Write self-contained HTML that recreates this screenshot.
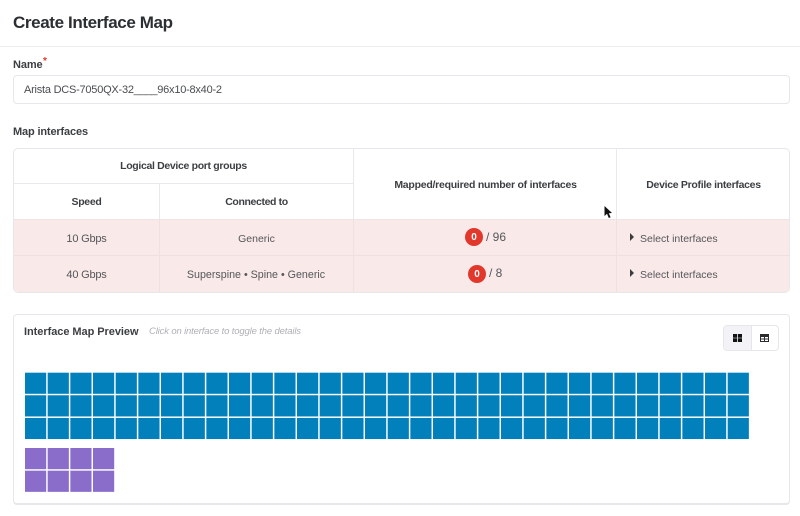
<!DOCTYPE html>
<html>
<head>
<meta charset="utf-8">
<style>
html,body{margin:0;padding:0;background:#fff;}
body{width:800px;height:516px;overflow:hidden;position:relative;font-family:"Liberation Sans",sans-serif;color:#4a4d50;}
.t{position:absolute;white-space:nowrap;line-height:16px;}
.b{font-weight:bold;color:#3c3f42;font-size:10.5px;}
.c{transform:translateX(-50%);}
.r{font-size:11px;color:#54575a;}
.box{position:absolute;box-sizing:border-box;}
.hl{position:absolute;height:1px;background:#e8e9ec;}
.vl{position:absolute;width:1px;background:#e8e9ec;}
.badge{position:absolute;width:18px;height:18px;border-radius:50%;background:#e2382b;color:#fff;font-size:10px;font-weight:bold;line-height:19px;text-align:center;}
.arrow{position:absolute;width:0;height:0;border-left:4.5px solid #3a3d40;border-top:4px solid transparent;border-bottom:4px solid transparent;}
</style>
</head>
<body>
<div class="t" style="left:13px;top:13px;font-size:17px;line-height:20px;font-weight:bold;color:#2b2e32;letter-spacing:-0.38px;">Create Interface Map</div>
<div class="hl" style="left:0;top:46px;width:800px;background:#eceded;"></div>

<div class="t b" style="left:13px;top:57px;font-size:11px;letter-spacing:-0.1px;">Name</div>
<div class="t" style="left:43px;top:57px;font-size:10px;line-height:10px;color:#e2382b;font-weight:bold;">*</div>
<div class="box" style="left:13px;top:75px;width:777px;height:29px;border:1px solid #e6e7ea;border-radius:4px;background:#fff;"></div>
<div class="t r" style="left:24px;top:82px;color:#4a4d50;letter-spacing:-0.23px;">Arista DCS-7050QX-32____96x10-8x40-2</div>

<div class="t b" style="left:13px;top:124px;font-size:11px;letter-spacing:-0.15px;">Map interfaces</div>

<!-- table -->
<div class="box" style="left:13px;top:148px;width:777px;height:145px;border:1px solid #e6e7ea;border-radius:5px;background:#fff;overflow:hidden;">
  <div style="position:absolute;left:0;top:70px;width:775px;height:73px;background:#fae9e9;"></div>
</div>
<div class="hl" style="left:14px;top:183px;width:339px;"></div>
<div class="hl" style="left:14px;top:219px;width:776px;background:#efe3e4;"></div>
<div class="hl" style="left:14px;top:255px;width:776px;background:#efdfe0;"></div>
<div class="vl" style="left:159px;top:183px;height:36px;"></div>
<div class="vl" style="left:159px;top:219px;height:73px;background:#efe0e1;"></div>
<div class="vl" style="left:353px;top:149px;height:70px;"></div>
<div class="vl" style="left:353px;top:219px;height:73px;background:#efe0e1;"></div>
<div class="vl" style="left:616px;top:149px;height:70px;"></div>
<div class="vl" style="left:616px;top:219px;height:73px;background:#efe0e1;"></div>

<div class="t b c" style="left:183.5px;top:158px;letter-spacing:-0.33px;">Logical Device port groups</div>
<div class="t b c" style="left:86.5px;top:194px;letter-spacing:-0.3px;">Speed</div>
<div class="t b c" style="left:256.5px;top:194px;letter-spacing:-0.38px;">Connected to</div>
<div class="t b c" style="left:485.5px;top:177px;letter-spacing:-0.25px;">Mapped/required number of interfaces</div>
<div class="t b c" style="left:703.5px;top:177px;letter-spacing:-0.3px;">Device Profile interfaces</div>

<div class="t r c" style="left:86.5px;top:231px;letter-spacing:-0.2px;">10 Gbps</div>
<div class="t r c" style="left:256.5px;top:231px;font-size:10.5px;">Generic</div>
<div class="t r c" style="left:86.5px;top:267px;letter-spacing:-0.2px;">40 Gbps</div>
<div class="t r c" style="left:256px;top:267px;font-size:10.7px;">Superspine • Spine • Generic</div>

<div class="badge" style="left:465px;top:228px;">0</div>
<div class="t" style="left:486px;top:229px;font-size:12px;color:#54575a;">/ 96</div>
<div class="badge" style="left:468px;top:265px;">0</div>
<div class="t" style="left:489px;top:265px;font-size:12px;color:#54575a;">/ 8</div>

<div class="arrow" style="left:629.5px;top:233px;"></div>
<div class="t r" style="left:640px;top:231px;font-size:10.5px;">Select interfaces</div>
<div class="arrow" style="left:629.5px;top:269px;"></div>
<div class="t r" style="left:640px;top:267px;font-size:10.5px;">Select interfaces</div>

<!-- cursor -->
<svg style="position:absolute;left:603px;top:205px;" width="10" height="15" viewBox="0 0 10 15"><path d="M1.5 1 L1.5 11 L4 8.8 L5.8 13 L7.6 12.2 L5.8 8.2 L9 8 Z" fill="#111"/></svg>

<!-- preview -->
<div class="box" style="left:13px;top:314px;width:777px;height:191px;border:1px solid #e6e7ea;border-bottom:2px solid #e6e7ea;border-radius:4px;background:#fff;"></div>
<div class="t" style="left:24px;top:324px;font-size:11px;font-weight:bold;color:#3c3f42;letter-spacing:-0.05px;">Interface Map Preview</div>
<div class="t" style="left:149px;top:324px;font-size:9.5px;font-style:italic;color:#aeb0b3;letter-spacing:-0.15px;">Click on interface to toggle the details</div>

<div class="box" style="left:723px;top:325px;width:56px;height:26px;border:1px solid #e6e7ea;border-radius:4px;background:#fff;overflow:hidden;">
  <div style="position:absolute;left:0;top:0;width:27px;height:24px;background:#f3f3f7;border-right:1px solid #e6e7ea;"></div>
</div>
<svg style="position:absolute;left:733px;top:334px;" width="9" height="8" viewBox="0 0 9 8"><path d="M0 0h4.1v3.7H0zM4.9 0h4.1v3.7H4.9zM0 4.3h4.1V8H0zM4.9 4.3h4.1V8H4.9z" fill="#111214"/></svg>
<svg style="position:absolute;left:760px;top:334px;" width="9" height="8" viewBox="0 0 9 8"><path d="M0.5 0.5h8v7h-8z M0.5 2.5h8 M0.5 5h8 M4.5 2.5v5" fill="none" stroke="#2a2b2d" stroke-width="1"/><path d="M0 0h9v2.4H0z" fill="#2a2b2d"/></svg>

<svg style="position:absolute;left:0;top:0;" width="800" height="516">
  <defs>
    <pattern id="p1" x="25" y="372.6" width="22.667" height="22.667" patternUnits="userSpaceOnUse"><rect width="21.2" height="21.2" fill="#0180bb"/></pattern>
    <pattern id="p2" x="25" y="448" width="22.667" height="22.667" patternUnits="userSpaceOnUse"><rect width="21.2" height="21.2" fill="#8a6dcb"/></pattern>
  </defs>
  <rect x="25" y="372.6" width="724.5" height="66.6" fill="url(#p1)"/>
  <rect x="25" y="448" width="89.5" height="44" fill="url(#p2)"/>
</svg>
</body>
</html>
